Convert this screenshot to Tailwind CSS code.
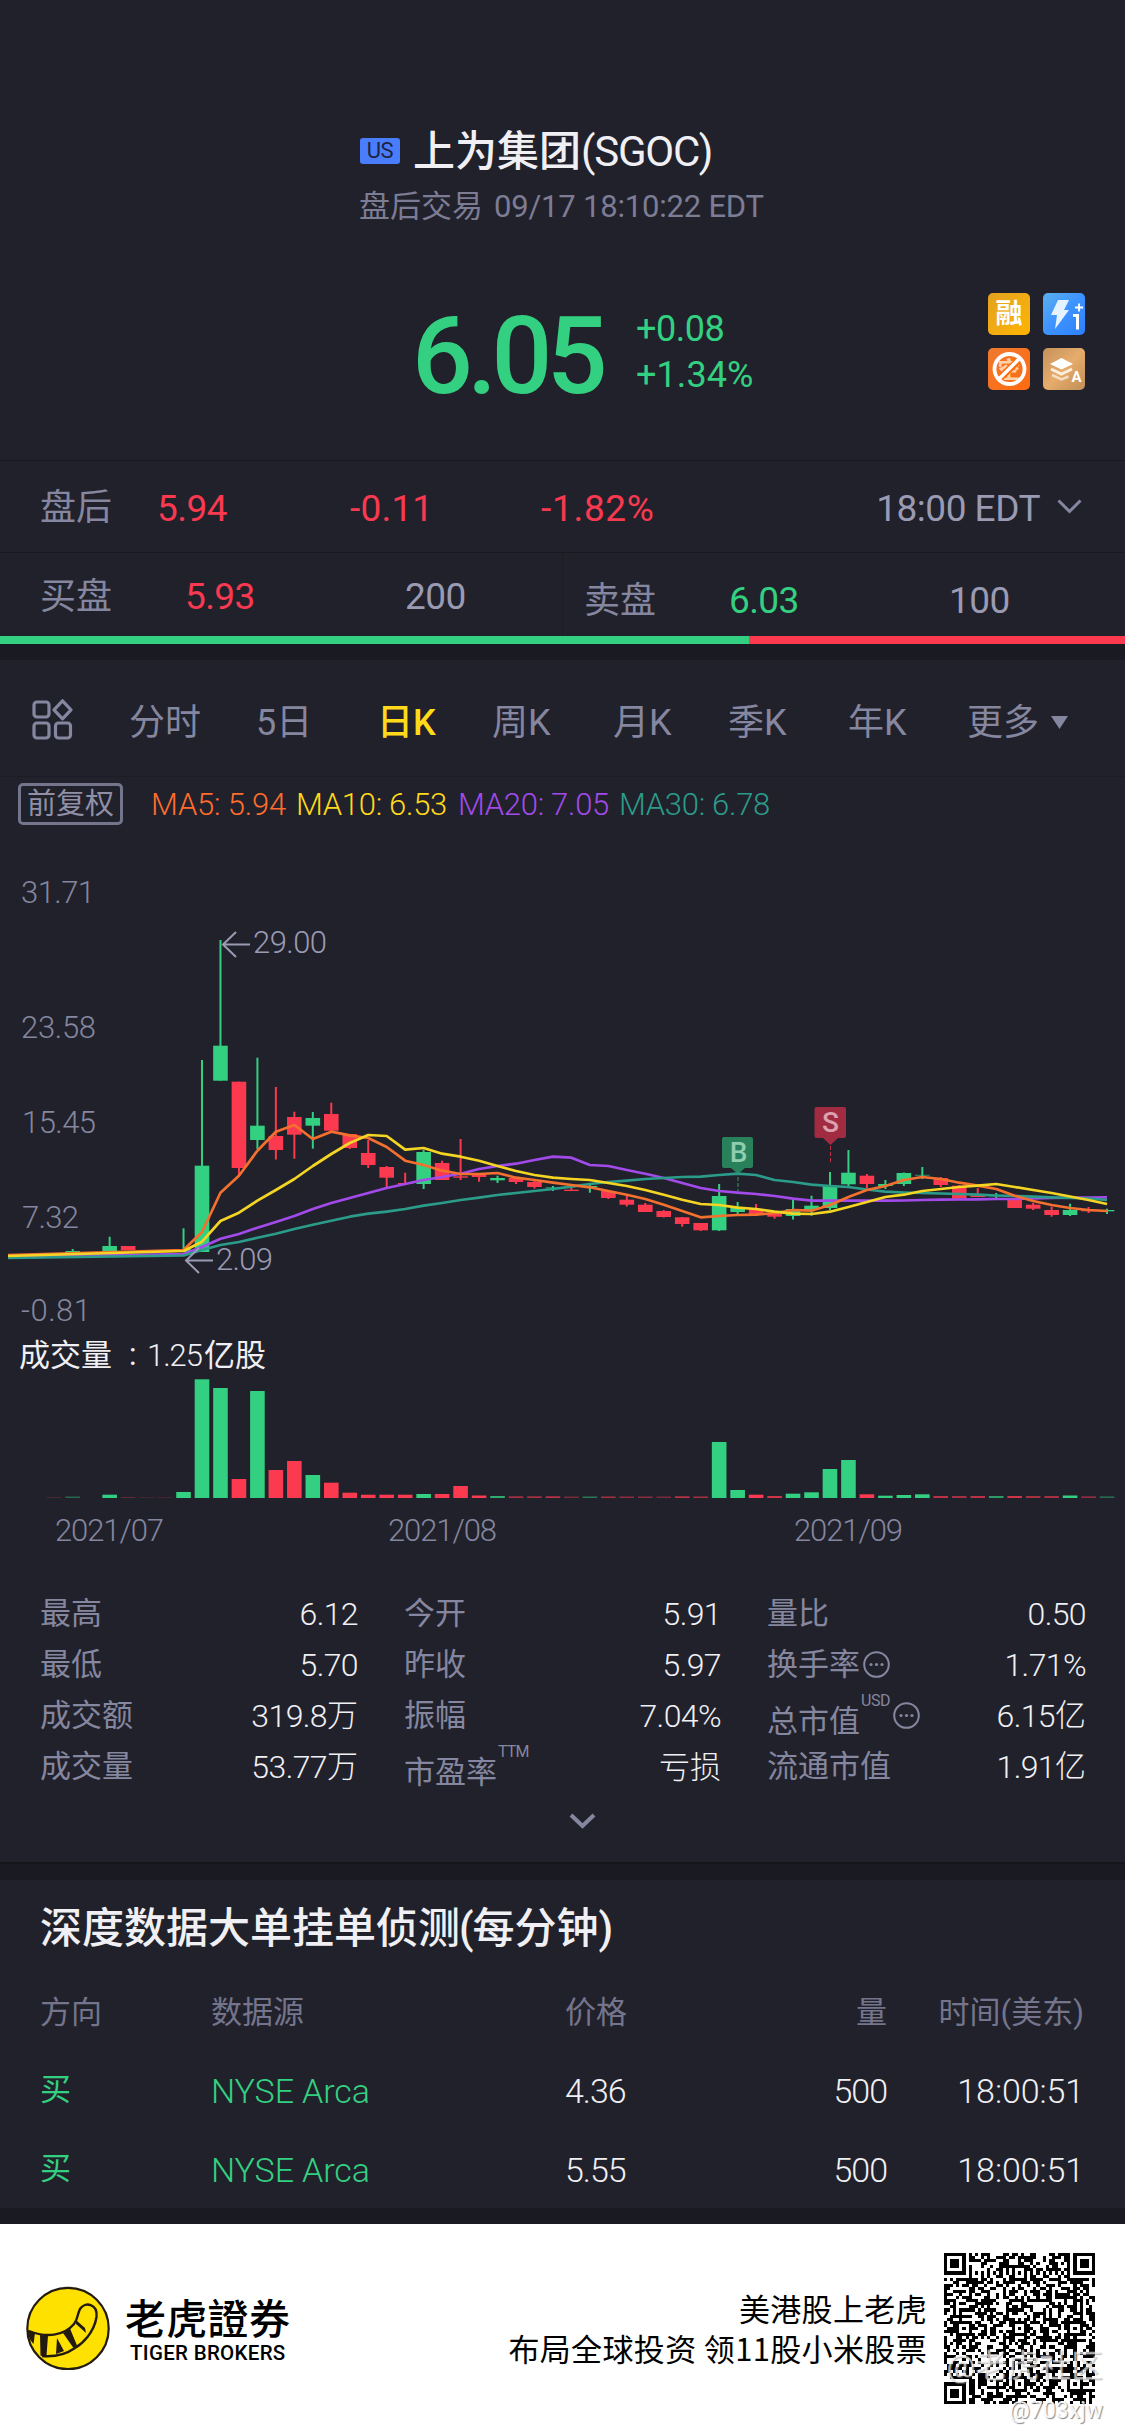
<!DOCTYPE html>
<html lang="zh-CN">
<head>
    <meta charset="UTF-8">
    <meta name="viewport" content="width=device-width, initial-scale=1.0">
    <title>上为集团(SGOC)</title>
    <script src="https://cdn.jsdelivr.net/npm/@tailwindcss/browser@4"></script>
</head>
<body class="bg-[#21212b] w-[1125px] h-[2434px] overflow-hidden font-['Roboto','Noto_Sans_CJK_SC',sans-serif] text-[#85869f] leading-none whitespace-nowrap">

    <!-- Quote Header -->
    <header class="h-[461px] border-b border-[#191921] pt-[130px] flex flex-col">
        <div class="flex items-center h-[44px] pl-[360px]">
            <span class="w-[40px] h-[26px] mt-[-2px] rounded-[3px] bg-[#4a7dfb] text-[#1d2440] text-[22px] flex items-center justify-center tracking-[-0.5px]">US</span>
            <h1 class="ml-[13px] text-[42px] text-[#f0f0f4] flex items-center"><span class="font-medium">上为集团</span><span class="tracking-[-1.2px]">(SGOC)</span></h1>
        </div>
        <p class="mt-[16px] h-[32px] pl-[359px] text-[31px] flex items-center text-[#7c7c95]"><span>盘后交易</span><span class="ml-[11px] tracking-[-0.2px]">09/17 18:10:22 EDT</span></p>
        <div class="flex mt-[71px] h-[105px]">
            <div class="w-[220px] ml-[412px] text-[107px] font-medium text-[#34d081] tracking-[-5.5px] leading-[127px]">6.05</div>
            <div class="text-[36px] text-[#34d081] tracking-[-0.5px] ml-[4px]">
                <div class="h-[46px] pt-[18px]">+0.08</div>
                <div class="h-[46px] pt-[18px] tracking-[0.1px]">+1.34%</div>
            </div>
            <div class="grid grid-cols-2 gap-[13px] w-[97px] h-[97px] ml-auto mr-[40px]">
                <span class="w-[42px] h-[42px] rounded-[5px] bg-linear-to-br from-[#e3a21d] to-[#ffb400] text-white text-[27px] font-bold flex items-center justify-center">融</span>
                <svg class="w-[42px] h-[42px]" viewBox="0 0 42 42">
                    <defs><linearGradient id="bl" x1="0" y1="0" x2="1" y2="1"><stop offset="0" stop-color="#5bb0ee"/><stop offset=".5" stop-color="#3d93ff"/><stop offset="1" stop-color="#2d7ffd"/></linearGradient></defs>
                    <rect width="42" height="42" rx="5" fill="url(#bl)"/>
                    <path d="M15 7h11l-5 10h5L12 36l2-14H8z" fill="#e4f3ff"/>
                    <path d="M32 14.500h8M36 10.500v8" stroke="#fff" stroke-width="1.800"/>
                    <path d="M30 22.500h4.500v14" fill="none" stroke="#fff" stroke-width="3"/>
                </svg>
                <svg class="w-[42px] h-[42px]" viewBox="0 0 42 42">
                    <defs><linearGradient id="or" x1="0" y1="0" x2="1" y2="1"><stop offset="0" stop-color="#ee7a30"/><stop offset="1" stop-color="#ff6a10"/></linearGradient></defs>
                    <rect width="42" height="42" rx="5" fill="url(#or)"/>
                    <text x="21" y="29.500" text-anchor="middle" font-size="23" font-weight="700" fill="#ffd2a8">空</text>
                    <path d="M33 10L10 32" stroke="#ff6a10" stroke-width="7"/>
                    <path d="M32 10L10 32" stroke="#fff" stroke-width="3.500"/>
                    <circle cx="21.500" cy="21" r="15" fill="none" stroke="#fff" stroke-width="3.800"/>
                </svg>
                <svg class="w-[42px] h-[42px]" viewBox="0 0 42 42">
                    <defs><linearGradient id="br" x1="0" y1="0" x2="1" y2="1"><stop offset="0" stop-color="#c4915c"/><stop offset=".5" stop-color="#e6ac6a"/><stop offset="1" stop-color="#c08e58"/></linearGradient></defs>
                    <rect width="42" height="42" rx="5" fill="url(#br)"/>
                    <path d="M7 16l11.500-6 11.500 6-11.500 5.500z" fill="#fff"/>
                    <path d="M8 21l10.500 5 10.500-5" fill="none" stroke="#fbeedd" stroke-width="3"/>
                    <path d="M9 27l9.500 4.500 7-3" fill="none" stroke="#f3dcc0" stroke-width="2.500"/>
                    <text x="28.500" y="34" font-size="15" font-weight="700" fill="#fff">A</text>
                </svg>
            </div>
        </div>
    </header>

    <!-- After-hours row -->
    <div class="flex items-center h-[92px] border-b border-[#191921] pl-[40px] pr-[43px] pt-[3px] text-[37px] text-[#f8394f] tracking-[-0.5px]">
        <span class="w-[117px] text-[36px] text-[#85869f] tracking-normal">盘后</span>
        <span class="w-[193px]">5.94</span>
        <span class="w-[191px] tracking-[0.2px]">-0.11</span>
        <span class="tracking-[0.7px]">-1.82%</span>
        <span class="ml-auto text-[#9a9bb3]">18:00 EDT</span>
        <svg class="ml-[17px] mt-[-3px] w-[25px] h-[15px]" viewBox="0 0 25 15"><path d="M1.500 1.500l11 11 11-11" fill="none" stroke="#85869f" stroke-width="3"/></svg>
    </div>

    <!-- Bid / ask -->
    <div class="flex h-[83px] text-[37px] tracking-[-0.6px]">
        <div class="w-[563px] flex items-center pl-[40px] pt-[4px] border-r border-[#1c1c25]">
            <span class="w-[145px] text-[36px] tracking-normal">买盘</span>
            <span class="w-[220px] text-[#f8394f]">5.93</span>
            <span class="text-[#9a9bb3]">200</span>
        </div>
        <div class="flex items-center pl-[21px] pt-[12px]">
            <span class="w-[145px] text-[36px] tracking-normal">卖盘</span>
            <span class="w-[220px] text-[#34d081]">6.03</span>
            <span class="text-[#9a9bb3]">100</span>
        </div>
    </div>
    <div class="flex h-2">
        <div class="bg-[#34d081] w-[749px]"></div>
        <div class="bg-[#fc3a4f] flex-1"></div>
    </div>
    <div class="h-4 bg-[#1a1a23]"></div>

    <!-- Period tabs -->
    <nav class="grid grid-cols-[97px_127px_121px_115px_121px_115px_120px_119px_auto] items-center h-[117px] border-b border-[#1c1c25] pl-[32px] pt-[10px] text-[36px]">
        <svg class="w-[41px] h-[41px] mt-[-8px]" viewBox="0 0 41 41" fill="none" stroke="#85869f" stroke-width="3.200">
            <rect x="2" y="3" width="15" height="15" rx="3"/>
            <path d="M30.500 1.800l8.500 9-8.500 9-8.500-9z" stroke-linejoin="round"/>
            <rect x="2" y="24" width="15" height="15" rx="3"/>
            <rect x="23.500" y="24" width="15" height="15" rx="3"/>
        </svg>
        <span>分时</span>
        <span>5日</span>
        <span class="text-[#ffd91a] font-medium">日K</span>
        <span>周K</span>
        <span>月K</span>
        <span>季K</span>
        <span>年K</span>
        <span class="flex items-center gap-3">更多<svg class="w-[17px] h-[13px] mt-[-2px]" viewBox="0 0 17 13"><path d="M0 0h17L8.500 13z" fill="#85869f"/></svg></span>
    </nav>

    <!-- Moving averages -->
    <div class="flex items-center h-[54px] pl-[18px] text-[31px] font-light">
        <span class="w-[105px] h-[42px] border-[3px] border-[#74758c] rounded-[5px] text-[29px] text-[#8f90a6] font-normal flex items-center justify-center">前复权</span>
        <span class="ml-[28px] w-[145px] tracking-[-0.2px] text-[#ff6d2e]">MA5: 5.94</span>
        <span class="w-[162px] tracking-[-0.3px] text-[#ffd91a]">MA10: 6.53</span>
        <span class="w-[161px] tracking-[-0.3px] text-[#a24bea]">MA20: 7.05</span>
        <span class="tracking-[-0.3px] text-[#2b9c8a]">MA30: 6.78</span>
    </div>

    <!-- Candles + volume -->
    <svg id="chart" class="block w-[1125px] h-[729px]" viewBox="0 831 1125 729"></svg>

    <!-- Stats -->
    <section class="grid grid-cols-[318px_317px_319px] gap-x-[46px] auto-rows-[51px] items-center pl-[40px] pt-[28px] h-[246px] text-[31px] [&_b]:font-light [&_b]:text-[#f0f0f4] [&_b]:text-[32px] [&_b]:tracking-[-0.6px] [&_i]:tracking-normal [&_i]:text-[31px] [&_i]:not-italic [&_div]:flex [&_div]:items-center [&_div]:justify-between">
        <div>最高<b>6.12</b></div>
        <div>今开<b>5.91</b></div>
        <div>量比<b>0.50</b></div>
        <div>最低<b>5.70</b></div>
        <div>昨收<b>5.97</b></div>
        <div><span class="flex items-center gap-[3px]">换手率<svg class="w-[27px] h-[27px]" viewBox="0 0 27 27"><circle cx="13.500" cy="13.500" r="12.300" fill="none" stroke="#85869f" stroke-width="2"/><g fill="#85869f"><circle cx="8" cy="13.500" r="1.600"/><circle cx="13.500" cy="13.500" r="1.600"/><circle cx="19" cy="13.500" r="1.600"/></g></svg></span><b>1.71%</b></div>
        <div>成交额<b class="flex items-center">319.8<i>万</i></b></div>
        <div>振幅<b>7.04%</b></div>
        <div><span class="flex items-center"><span class="mt-[11px]">总市值</span><sup class="text-[16px] ml-px mt-[-30px] w-[32px] top-0 tracking-[-0.5px]">USD</sup><svg class="w-[27px] h-[27px]" viewBox="0 0 27 27"><circle cx="13.500" cy="13.500" r="12.300" fill="none" stroke="#85869f" stroke-width="2"/><g fill="#85869f"><circle cx="8" cy="13.500" r="1.600"/><circle cx="13.500" cy="13.500" r="1.600"/><circle cx="19" cy="13.500" r="1.600"/></g></svg></span><b class="flex items-center">6.15<i>亿</i></b></div>
        <div>成交量<b class="flex items-center">53.77<i>万</i></b></div>
        <div><span class="flex items-center"><span class="mt-[11px]">市盈率</span><sup class="text-[16px] ml-px mt-[-30px] top-0 tracking-[-0.8px]">TTM</sup></span><b><i>亏损</i></b></div>
        <div>流通市值<b class="flex items-center">1.91<i>亿</i></b></div>
    </section>
    <div class="h-[58px] pt-[7px] pl-[569px] border-b-2 border-[#15151c]">
        <svg class="w-[27px] h-[16px]" viewBox="0 0 27 16"><path d="M2 2l11.500 11L25 2" fill="none" stroke="#85869f" stroke-width="4"/></svg>
    </div>
    <div class="h-4 bg-[#1a1a23]"></div>

    <!-- Large order detection -->
    <section class="h-[328px] pl-[40px] pr-[41px]">
        <h2 class="h-[94px] pt-[3px] flex items-center text-[42px] font-medium text-[#f0f0f4]"><span>深度数据大单挂单侦测</span><span class="flex items-center ml-[-1px] tracking-[-1px]">(<span class="tracking-normal">每分钟</span>)</span></h2>
        <div class="grid grid-cols-[171px_354px_170px_152px_1fr] h-[76px] items-center text-[31px] text-[#74758c]">
            <span>方向</span><span>数据源</span><span>价格</span><span class="text-right">量</span><span class="flex items-center justify-end">时间(美东)</span>
        </div>
        <div class="grid grid-cols-[171px_354px_170px_152px_1fr] h-[79px] pt-[3px] items-center text-[34px] text-[#f0f0f4] tracking-[-1px] font-light [&>*]:h-[34px]">
            <span class="text-[31px] text-[#34d081] font-normal">买</span><span class="text-[#34d081] tracking-[-0.1px]">NYSE Arca</span><span>4.36</span><span class="text-right">500</span><span class="text-right tracking-[-0.1px]">18:00:51</span>
        </div>
        <div class="grid grid-cols-[171px_354px_170px_152px_1fr] h-[79px] pt-[3px] items-center text-[34px] text-[#f0f0f4] tracking-[-1px] font-light [&>*]:h-[34px]">
            <span class="text-[31px] text-[#34d081] font-normal">买</span><span class="text-[#34d081] tracking-[-0.1px]">NYSE Arca</span><span>5.55</span><span class="text-right">500</span><span class="text-right tracking-[-0.1px]">18:00:51</span>
        </div>
    </section>
    <div class="h-4 bg-[#1a1a23]"></div>

    <!-- Share footer -->
    <footer class="relative bg-white h-[210px] flex text-black">
        <svg class="w-[84px] h-[84px] ml-[26px] mt-[62px]" viewBox="0 0 84 84">
            <circle cx="42" cy="42.500" r="40.700" fill="#ffe100" stroke="#231a10" stroke-width="2.200"/>
            <path d="M3 45C20 52 38 50 48 38C52 33 51 29 54 23C59 15 72 18 70.500 31C68 47 56 58 49 62C39 69 27 71 16 70" fill="none" stroke="#231a10" stroke-width="2.400"/>
            <path d="M2 44l7 3-1.500 11C4 54 2 50 2 44zM14 49l8 .8-1.500 20-6 0zM31 52l7 13-8 3zM37 47l7-4.500 7 17-3.500 2.500zM50 34l9 8 1 5-10-9z" fill="#231a10"/>
        </svg>
        <div class="ml-[15px] mt-[71px]">
            <div class="font-['Noto_Sans_CJK_TC',sans-serif] font-medium text-[41px] tracking-[0.3px] h-[48px] leading-[42px]">老虎證券</div>
            <div class="text-[20.500px] font-medium pl-[5px] tracking-[0.3px]">TIGER BROKERS</div>
        </div>
        <div class="ml-auto mt-[64px] text-right text-[31px] leading-[40px] tracking-[0.35px] font-['Noto_Sans_CJK_SC',sans-serif]">美港股上老虎<br>布局全球投资 领11股小米股票</div>
        <svg id="qr" class="w-[151px] h-[151px] ml-[17px] mr-[30px] mt-[29px]" viewBox="0 0 49 49" shape-rendering="crispEdges"></svg>
        <div class="absolute right-[22px] top-[126px] text-[32px] text-white/60 [text-shadow:1px_1px_1px_#8888]">@老虎社区</div>
        <div class="absolute right-[22px] top-[175px] text-[23px] text-white/90 [text-shadow:1px_1px_1px_#888]">@703xjw</div>
    </footer>

    <script>
        const G = "#34d081", R = "#fc3a4f";
        const x = i => 202 + 18.47 * i;
        let out = "";
        const rect = (cx, top, bottom, color, op = 1) => {
            out += `<rect x="${cx - 7.3}" y="${top}" width="14.6" height="${Math.max(bottom - top, 1)}" fill="${color}" opacity="${op}"/>`;
        };

        // [index, color, high, bodyTop, bodyBottom, low]
        const candles = [
            [-7, G, 1249, 1251, 1253, 1253], [-5, G, 1236.7, 1246, 1252, 1252], [-4, R, 1246, 1246, 1250, 1250],
            [-1, G, 1228.3, 1249, 1252, 1252], [0, G, 1060, 1165.7, 1252, 1252], [1, G, 940, 1045.7, 1080.7, 1080.7],
            [2, R, 1081.7, 1081.7, 1168, 1176], [3, G, 1057.7, 1125.7, 1140, 1149], [4, R, 1087, 1136, 1150, 1159.5],
            [5, R, 1111.7, 1117, 1134.7, 1158.7], [6, G, 1112, 1118, 1125.7, 1148.7], [7, R, 1102.7, 1114, 1130.7, 1131],
            [8, R, 1134, 1134, 1148, 1149], [9, R, 1140, 1153, 1165, 1168], [10, R, 1166, 1167, 1177.7, 1188],
            [11, R, 1172.7, 1183, 1184, 1184], [12, G, 1150, 1152, 1184, 1189], [13, R, 1160.7, 1163, 1180, 1180],
            [14, R, 1139, 1176.3, 1177.7, 1180], [15, R, 1174, 1174.7, 1177, 1181.7], [16, G, 1175.7, 1178, 1180.3, 1183],
            [17, R, 1177, 1178, 1182, 1184], [18, R, 1179, 1182, 1187, 1188.5], [19, G, 1186, 1187, 1188.5, 1191],
            [20, R, 1186, 1189.7, 1191, 1191], [21, G, 1185, 1186, 1187, 1192.7], [22, R, 1191, 1191, 1198, 1199],
            [23, R, 1194, 1199.7, 1204.7, 1206.5], [24, R, 1203, 1204.7, 1212, 1212], [25, R, 1210, 1211, 1217, 1217.5],
            [26, R, 1217, 1217.3, 1224, 1226.7], [27, R, 1223, 1223, 1230.3, 1231], [28, G, 1184, 1196, 1230.3, 1231],
            [29, G, 1202, 1208, 1212, 1214], [30, R, 1204, 1209, 1214.7, 1215], [31, R, 1213, 1213.5, 1216.7, 1218.7],
            [32, G, 1200, 1209, 1216, 1219.5], [33, G, 1195.7, 1205.7, 1210, 1215.7], [34, G, 1172, 1185.7, 1208, 1210],
            [35, G, 1150, 1172.7, 1184.3, 1186], [36, R, 1174, 1175.7, 1184, 1188], [37, G, 1180, 1184, 1186, 1189],
            [38, G, 1172.5, 1173, 1184, 1186], [39, G, 1167, 1174.7, 1176, 1179], [40, R, 1177, 1178, 1185, 1187],
            [41, R, 1185, 1185.7, 1198.7, 1199], [42, R, 1188, 1195.3, 1197, 1197], [43, G, 1193, 1195, 1196.5, 1199],
            [44, R, 1199.5, 1200, 1208, 1208], [45, R, 1203, 1204.7, 1208.7, 1210], [46, R, 1206.7, 1210, 1215, 1216.7],
            [47, G, 1203.7, 1210, 1215, 1216], [48, R, 1207, 1210, 1211.3, 1213], [49, G, 1208.7, 1210, 1211.3, 1214]
        ];
        candles.forEach(([i, color, high, top, bottom, low]) => {
            out += `<line x1="${x(i)}" x2="${x(i)}" y1="${high}" y2="${low}" stroke="${color}" stroke-width="2"/>`;
            rect(x(i), top, bottom, color, [19, 39, 43].includes(i) ? 0.5 : 1);
        });

        // Moving averages, first value is the left edge, the rest start at index -1
        const averages = {
            "#2b9c8a": [1258, 1255.5, 1250, 1245, 1242, 1237.7, 1233.7, 1229, 1224.7, 1220.7, 1216.7, 1213.7, 1211.7, 1209, 1205.7, 1203, 1200, 1197.7, 1195, 1193, 1191, 1189, 1186.7, 1184, 1182, 1180.7, 1179, 1178, 1177, 1176.7, 1175, 1173.7, 1175, 1180, 1182, 1184.7, 1186, 1187, 1189.5, 1191.7, 1192.5, 1193, 1193.5, 1194, 1194.7, 1195.5, 1196, 1196.7, 1197.3, 1198, 1198.5, 1200],
            "#a24bea": [1257, 1254, 1247, 1238.7, 1234, 1227.7, 1222, 1216, 1209, 1203, 1198, 1193, 1188, 1184, 1180, 1177, 1173.7, 1169, 1166, 1163.7, 1160, 1156.7, 1157.7, 1165, 1166, 1170, 1173.7, 1178, 1183, 1188, 1191, 1192.7, 1194, 1196, 1198.7, 1200.7, 1200.7, 1200.7, 1200.7, 1200.7, 1200.5, 1200, 1199.7, 1199.5, 1199.3, 1199, 1199, 1198.5, 1198, 1197.7, 1197.5, 1197.3],
            "#f5d523": [1256, 1251, 1241.7, 1221, 1212.7, 1200.7, 1190, 1179, 1166, 1154, 1143, 1135, 1136, 1149.7, 1148, 1153.7, 1156.7, 1160.7, 1166, 1171, 1175, 1177.7, 1179, 1180, 1183, 1186, 1190, 1194.7, 1199.7, 1204, 1205, 1207.7, 1209, 1211.7, 1213.7, 1214, 1211.7, 1207, 1202, 1197, 1194.7, 1191, 1189, 1187, 1185.7, 1184, 1187, 1190, 1193, 1196.5, 1200, 1204],
            "#f4702f": [1255, 1250, 1232, 1192.7, 1175.7, 1150.7, 1131.7, 1125, 1139, 1131.7, 1135.3, 1138, 1147, 1160.7, 1165, 1170.7, 1174, 1174, 1173, 1177.7, 1180, 1182.7, 1185, 1187.3, 1191, 1194.7, 1199, 1204.7, 1211, 1217.3, 1216, 1215, 1214.7, 1213, 1210, 1210.7, 1205, 1197, 1190, 1186, 1180, 1177, 1179, 1182.7, 1185.7, 1189, 1195.7, 1201, 1205, 1208, 1210, 1211]
        };
        for (const color of ["#a24bea", "#2b9c8a", "#f4702f", "#f5d523"]) {
            const [start, ...values] = averages[color];
            const points = [`8,${start}`, ...values.map((v, i) => `${x(i - 1)},${v}`)].join(" ");
            out += `<polyline points="${points}" fill="none" stroke="${color}" stroke-width="2.700" stroke-linejoin="round"/>`;
        }

        // Volume: [index, color, top, opacity]
        const volume = [
            [-8, R, 1497, .2], [-7, G, 1496.5, .4], [-5, G, 1494.7], [-4, R, 1497, .3], [-3, R, 1497, .15], [-2, R, 1497, .15],
            [-1, G, 1492], [0, G, 1379.3], [1, G, 1388], [2, R, 1479], [3, G, 1391], [4, R, 1470], [5, R, 1461], [6, G, 1475],
            [7, R, 1482.7], [8, R, 1492.7], [9, R, 1494.7], [10, R, 1494.7], [11, R, 1494.7], [12, G, 1494], [13, R, 1494],
            [14, R, 1486], [15, R, 1495.5], [16, G, 1496, .8], [17, R, 1496.3, .6], [18, R, 1496.3, .6], [19, R, 1496.3, .7],
            [20, R, 1496.5, .4], [21, G, 1496.5, .5], [22, R, 1496.5, .6], [23, R, 1496.5, .5], [24, R, 1496.5, .5], [25, R, 1496.5, .4],
            [26, R, 1496.3, .7], [27, R, 1496.5, .6], [28, G, 1442], [29, G, 1490], [30, R, 1494.7], [31, R, 1496, .8], [32, G, 1493.7],
            [33, G, 1492.3], [34, G, 1469], [35, G, 1460], [36, R, 1494.3], [37, G, 1495.7], [38, G, 1495], [39, G, 1494.3],
            [40, R, 1496, .7], [41, R, 1496, .6], [42, R, 1496, .7], [43, G, 1496, .7], [44, R, 1496, .8], [45, R, 1496, .6],
            [46, R, 1496, .6], [47, G, 1495.5], [48, R, 1496.3, .5], [49, G, 1496.3, .4]
        ];
        volume.forEach(([i, color, top, op]) => rect(x(i), top, 1498, color, op));

        // Labels: [text, x, baseline, width]
        const labels = [
            ["31.71", 21, 903, 74], ["23.58", 21, 1037.5, 75], ["15.45", 22, 1133, 74], ["7.32", 22, 1228, 57], ["-0.81", 21, 1321, 70],
            ["29.00", 253, 953, 74], ["2.09", 216, 1269.5, 57],
            ["2021/07", 55, 1541, 109], ["2021/08", 388, 1541, 109], ["2021/09", 794, 1541, 109]
        ];
        labels.forEach(([text, lx, ly, w], i) => {
            out += `<text x="${lx}" y="${ly}" font-size="31" font-weight="300" textLength="${w}" fill="${i == 5 || i == 6 ? "#9a9bb3" : "#85869f"}">${text}</text>`;
        });
        out += `<g font-size="31" fill="#f0f0f4"><text x="19" y="1366">成交量</text><text x="129" y="1365">:</text><text x="147" y="1366" textLength="56" font-weight="300">1.25</text><text x="204" y="1366">亿股</text></g>`;
        out += `<path d="M236 932L223 944.500L236 957M223 944.500H250M199 1248L186 1260.500L199 1273M186 1260.500H213" fill="none" stroke="#9a9bb3" stroke-width="2"/>`;

        // Buy / sell flags
        out += `<g fill-opacity=".8"><path d="M724 1137h27q2 0 2 2v27q0 2-2 2h-6l-7 6-7-6h-7q-2 0-2-2v-27q0-2 2-2z" fill="#2a9a68"/><path d="M817 1107h27q2 0 2 2v27q0 2-2 2h-6l-7.500 7-7.500-7h-6.500q-2 0-2-2v-27q0-2 2-2z" fill="#c23048"/></g>`;
        out += `<text x="738.500" y="1162" text-anchor="middle" font-size="28" font-weight="500" fill="#8fccb0">B</text><text x="830.500" y="1132" text-anchor="middle" font-size="28" font-weight="500" fill="#dda0ad">S</text>`;
        out += `<path d="M738 1177v14" stroke="#2a9a68" stroke-width="1" stroke-dasharray="4 2"/><path d="M830.500 1146v16" stroke="#c23048" stroke-width="1" stroke-dasharray="4 2"/>`;
        document.getElementById("chart").innerHTML = out;

        // QR code
        const n = 49, centers = [6, 24, 42];
        let seed = 703, cells = "";
        const random = () => (seed = (seed * 1103515245 + 12345) % 2147483648) / 2147483648;
        function dark(r, c) {
            for (const [fr, fc] of [[3, 3], [3, n - 4], [n - 4, 3]]) {
                const d = Math.max(Math.abs(r - fr), Math.abs(c - fc));
                if (d <= 4) return d != 2 && d != 4;
            }
            for (const ar of centers) for (const ac of centers) {
                const d = Math.max(Math.abs(r - ar), Math.abs(c - ac));
                if (d <= 2) return d != 1;
            }
            if (r == 6 || c == 6) return (r + c) % 2 == 0;
            return random() < 0.52;
        }
        for (let r = 0; r < n; r++) for (let c = 0; c < n; c++) {
            if (dark(r, c)) cells += `M${c} ${r}h1v1h-1z`;
        }
        document.getElementById("qr").innerHTML = `<path d="${cells}"/>`;
    </script>
</body>
</html>
